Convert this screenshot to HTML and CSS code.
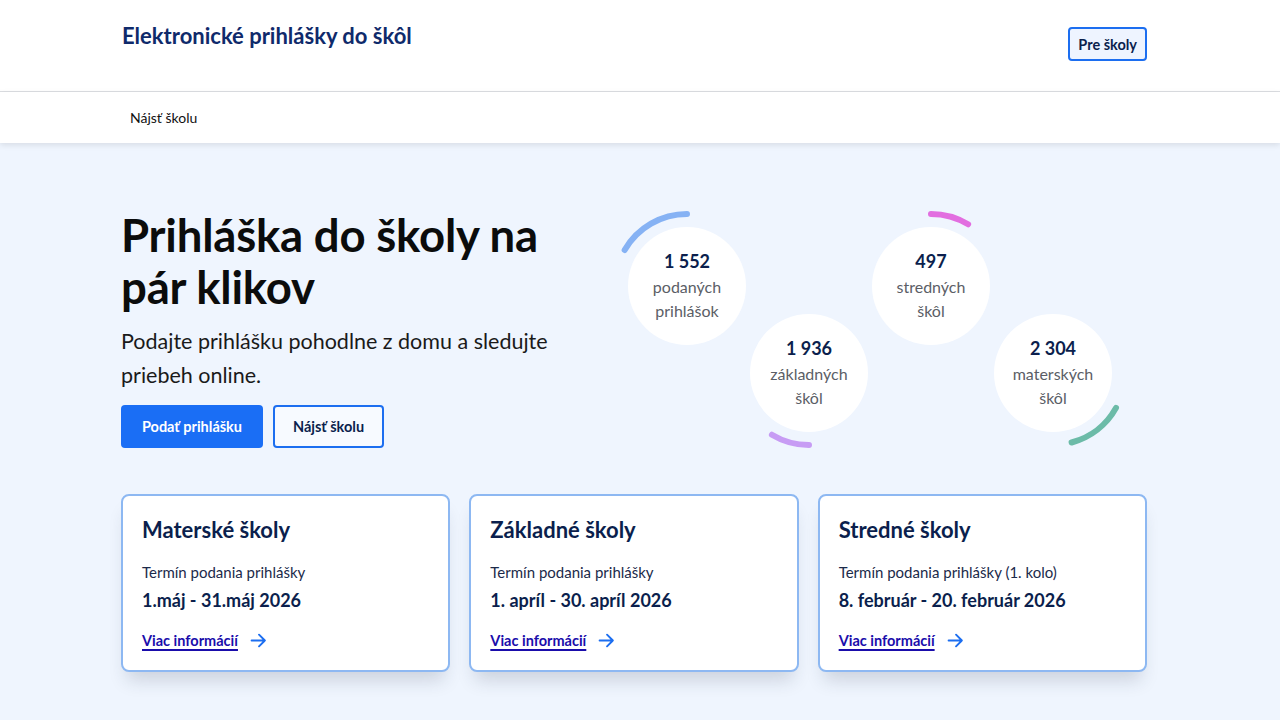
FILE: index.html
```html
<!DOCTYPE html>
<html lang="sk">
<head>
<meta charset="utf-8">
<title>Elektronické prihlášky do škôl</title>
<link rel="stylesheet" href="styles.css">
</head>
<body>
<header class="header">
  <div class="container header-inner">
    <div class="site-title">Elektronické prihlášky do škôl</div>
    <a class="btn-outline-sm" href="#">Pre školy</a>
  </div>
</header>
<nav class="nav">
  <div class="container nav-inner">
    <a class="nav-link" href="#">Nájsť školu</a>
  </div>
</nav>
<main class="main">
  <div class="container">
    <section class="hero">
      <div class="hero-text">
        <h1 class="hero-title">Prihláška do školy na pár klikov</h1>
        <p class="hero-sub">Podajte prihlášku pohodlne z domu a sledujte priebeh online.</p>
        <div class="hero-actions">
          <a class="btn btn-primary" href="#">Podať prihlášku</a>
          <a class="btn btn-secondary" href="#">Nájsť školu</a>
        </div>
      </div>
      <div class="stats">
        <div class="stat">
          <svg class="arc" viewBox="0 0 152 152"><path d="M13.65 40 A72 72 0 0 1 76 4" stroke="#86b2f4"/></svg>
          <div class="stat-num">1 552</div>
          <div class="stat-label">podaných<br>prihlášok</div>
        </div>
        <div class="stat stat-low">
          <svg class="arc" viewBox="0 0 152 152"><path d="M38.9 137.7 A72 72 0 0 0 76 148" stroke="#c79cf4"/></svg>
          <div class="stat-num">1 936</div>
          <div class="stat-label">základných<br>škôl</div>
        </div>
        <div class="stat">
          <svg class="arc" viewBox="0 0 152 152"><path d="M76 4 A72 72 0 0 1 113.1 14.3" stroke="#e26ee0"/></svg>
          <div class="stat-num">497</div>
          <div class="stat-label">stredných<br>škôl</div>
        </div>
        <div class="stat stat-low">
          <svg class="arc" viewBox="0 0 152 152"><path d="M139 110.9 A72 72 0 0 1 94.6 145.5" stroke="#6cbba8"/></svg>
          <div class="stat-num">2 304</div>
          <div class="stat-label">materských<br>škôl</div>
        </div>
      </div>
    </section>
    <section class="cards">
      <article class="card">
        <h2 class="card-title">Materské školy</h2>
        <div class="card-term">Termín podania prihlášky</div>
        <div class="card-date">1.máj - 31.máj 2026</div>
        <a class="card-link" href="#"><span>Viac informácií</span><svg class="arrow" viewBox="0 0 16 16"><path d="M1.5 8h12.5M8.5 2.5L14 8l-5.5 5.5"/></svg></a>
      </article>
      <article class="card">
        <h2 class="card-title">Základné školy</h2>
        <div class="card-term">Termín podania prihlášky</div>
        <div class="card-date">1. apríl - 30. apríl 2026</div>
        <a class="card-link" href="#"><span>Viac informácií</span><svg class="arrow" viewBox="0 0 16 16"><path d="M1.5 8h12.5M8.5 2.5L14 8l-5.5 5.5"/></svg></a>
      </article>
      <article class="card">
        <h2 class="card-title">Stredné školy</h2>
        <div class="card-term">Termín podania prihlášky (1. kolo)</div>
        <div class="card-date">8. február - 20. február 2026</div>
        <a class="card-link" href="#"><span>Viac informácií</span><svg class="arrow" viewBox="0 0 16 16"><path d="M1.5 8h12.5M8.5 2.5L14 8l-5.5 5.5"/></svg></a>
      </article>
    </section>
  </div>
</main>
</body>
</html>
```

FILE: styles.css
```css
* { box-sizing: border-box; }
html, body { margin: 0; padding: 0; }
body {
  font-family: Lato, "Noto Sans", "Liberation Sans", sans-serif;
  background: #eff5fe;
  color: #0b0c0c;
  height: 720px;
  overflow: hidden;
}
a { text-decoration: none; color: inherit; }
.container {
  width: 1026px;
  margin-left: 121px;
}
.header {
  background: #fff;
  height: 92px;
  border-bottom: 1px solid #dcdee2;
}
.header-inner {
  display: flex;
  justify-content: space-between;
  align-items: flex-start;
  padding-top: 23px;
}
.site-title {
  font-size: 22px;
  font-weight: 700;
  line-height: 26px;
  color: #0f2a6b;
  margin-left: 1px;
}
.btn-outline-sm {
  margin-top: 4px;
  height: 34px;
  padding: 0 8px;
  display: flex;
  align-items: center;
  border: 2px solid #1c6ef0;
  border-radius: 4px;
  background: #eef4ff;
  color: #0b1f4d;
  font-weight: 700;
  font-size: 14.5px;
}
.nav {
  background: #fff;
  height: 51px;
  box-shadow: 0 2px 6px rgba(0, 0, 0, 0.10);
  position: relative;
}
.nav-inner {
  display: flex;
  align-items: center;
  height: 51px;
  padding-left: 9px;
}
.nav-link {
  font-size: 14px;
  color: #111;
}
.main {
  padding-top: 66px;
}
.hero {
  display: flex;
  align-items: flex-start;
}
.hero-text {
  width: 470px;
}
.hero-title {
  margin: 0;
  font-size: 45.5px;
  line-height: 52px;
  font-weight: 700;
  color: #0b0c0c;
  letter-spacing: -0.2px;
}
.hero-sub {
  margin: 11px 0 0;
  font-size: 21.5px;
  line-height: 34px;
  color: #1a1a1a;
}
.hero-actions {
  display: flex;
  gap: 10px;
  margin-top: 13px;
}
.btn {
  height: 43px;
  display: flex;
  align-items: center;
  justify-content: center;
  font-size: 14.5px;
  font-weight: 700;
  border-radius: 4px;
}
.btn-primary {
  width: 142px;
  background: #1a6ef5;
  color: #fff;
}
.btn-secondary {
  width: 111px;
  border: 2px solid #1c6ef0;
  background: #f7faff;
  color: #0b1f4d;
}
.stats {
  margin-left: 37px;
  margin-top: 18px;
  display: flex;
  gap: 4px;
}
.stat {
  position: relative;
  width: 118px;
  height: 118px;
  border-radius: 50%;
  background: #fff;
  display: flex;
  flex-direction: column;
  align-items: center;
  justify-content: center;
  text-align: center;
}
.stat-low { margin-top: 87px; }
.arc {
  position: absolute;
  left: -17px;
  top: -17px;
  width: 152px;
  height: 152px;
  overflow: visible;
}
.arc path { fill: none; stroke-width: 6; stroke-linecap: round; }
.stat-num {
  font-size: 18px;
  font-weight: 700;
  line-height: 24px;
  color: #0b1f4d;
}
.stat-label {
  margin-top: 2px;
  font-size: 16px;
  line-height: 24px;
  color: #5b5e66;
}
.cards {
  display: grid;
  grid-template-columns: repeat(3, 1fr);
  gap: 19px;
  margin-top: 46px;
}
.card {
  background: #fff;
  border: 2px solid #8db8f2;
  border-radius: 8px;
  padding: 20px 19px 20px 19px;
  box-shadow: 0 14px 18px -6px rgba(40, 50, 70, 0.18);
}
.card-title {
  margin: 0;
  font-size: 22px;
  line-height: 28px;
  font-weight: 700;
  color: #0b1f4d;
}
.card-term {
  margin-top: 17px;
  font-size: 15px;
  line-height: 22px;
  color: #1b2a4a;
}
.card-date {
  margin-top: 5px;
  font-size: 18px;
  line-height: 24px;
  font-weight: 700;
  color: #0b1f4d;
}
.card-link {
  margin-top: 18px;
  display: flex;
  align-items: center;
  gap: 12px;
  height: 20px;
  font-size: 14.5px;
  font-weight: 700;
  color: #1a0dab;
}
.card-link span {
  text-decoration: underline;
  text-underline-offset: 3px;
  text-decoration-thickness: 2px;
}
.arrow {
  width: 17px;
  height: 17px;
  fill: none;
  stroke: #1c6ef0;
  stroke-width: 1.8;
  stroke-linecap: round;
  stroke-linejoin: round;
}
```
